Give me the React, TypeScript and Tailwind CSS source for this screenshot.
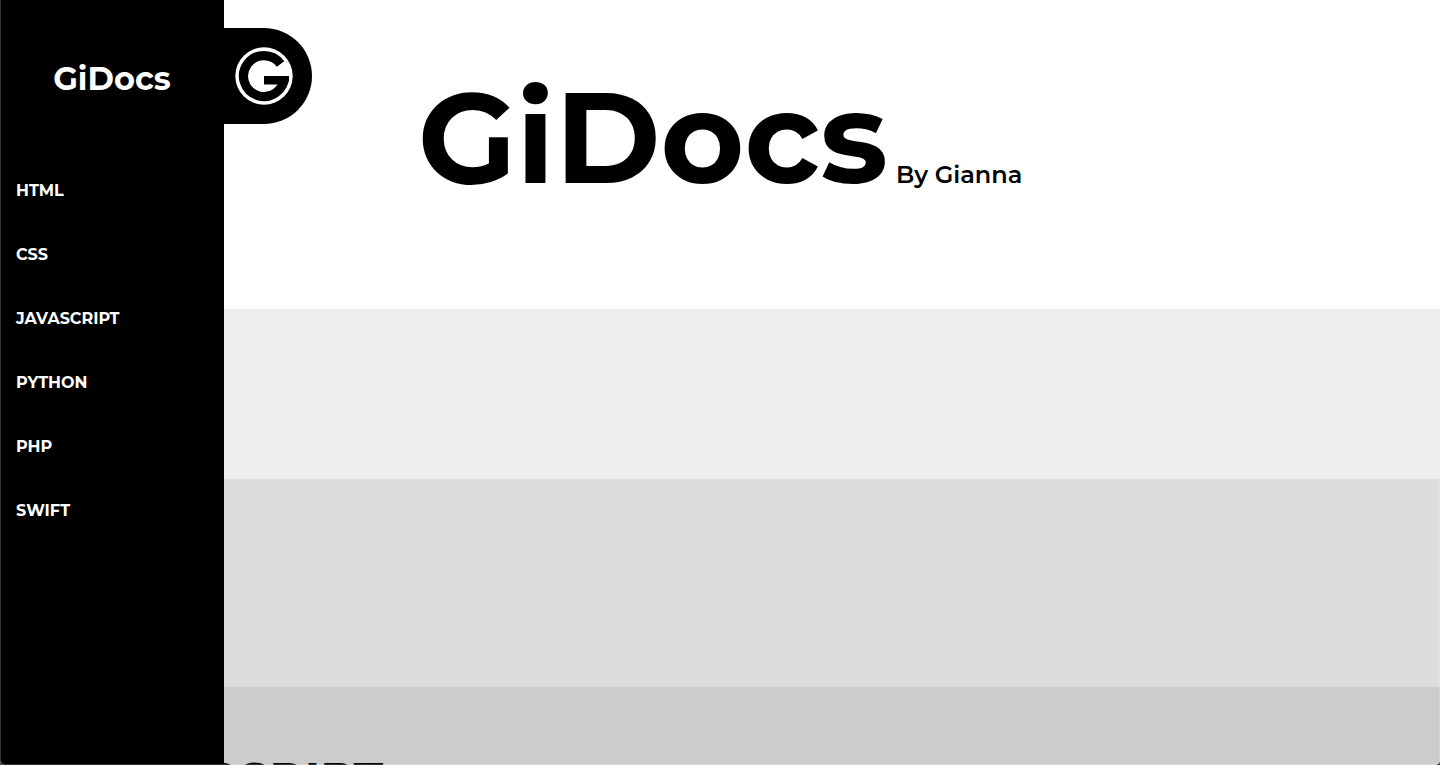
const links = ["HTML", "CSS", "JAVASCRIPT", "PYTHON", "PHP", "SWIFT"];

function Logo() {
  return (
    <svg viewBox="-32 -32 64 64" className="size-16" aria-hidden="true">
      <circle r="28.7" fill="#fff" />
      <path d="M16.6 -12A20.5 20.5 0 1 0 20.5 0" fill="none" stroke="#000" strokeWidth="9.2" />
      <path d="M0 0H25V4L23.6 8.4H0Z" fill="#000" />
    </svg>
  );
}

export default function App() {
  return (
    <div className="h-screen bg-[#444444]">
      <div className="relative flex h-full overflow-hidden rounded-b-[5px] bg-white font-['Montserrat','Inter',sans-serif] text-black">
        <nav className="relative z-10 w-56 shrink-0 bg-black text-white">
          <h2 className="pt-[57px] text-center text-[32px] leading-[44px] font-bold">GiDocs</h2>
          <ul className="mt-[58px]">
            {links.map((name) => (
              <li key={name}>
                <a href={`#${name.toLowerCase()}`} className="flex h-16 items-center px-4 text-base font-bold">
                  {name}
                </a>
              </li>
            ))}
          </ul>
          <button
            type="button"
            aria-label="Toggle menu"
            className="absolute top-7 left-full flex h-24 w-[88px] items-center rounded-r-full bg-black pl-2"
          >
            <Logo />
          </button>
        </nav>
        <main className="-ml-56 min-w-0 flex-1">
          <header className="h-[309px] pt-[59px] text-center">
            <h1 className="text-[128px] leading-[156px] font-bold whitespace-nowrap">
              GiDocs
              <span className="ml-2 text-2xl font-semibold">By Gianna</span>
            </h1>
          </header>
          <section id="html" className="h-[170px] bg-[#eeeeee]" />
          <section id="css" className="h-52 bg-[#dddddd]" />
          <section id="javascript" className="h-52 bg-[#cccccc] px-[73px] pt-[62px]">
            <h2 className="text-5xl leading-[60px] font-bold">JAVASCRIPT</h2>
          </section>
        </main>
        <div className="pointer-events-none absolute inset-0 z-20 rounded-b-[5px] border border-t-0 border-white/20" />
      </div>
    </div>
  );
}
